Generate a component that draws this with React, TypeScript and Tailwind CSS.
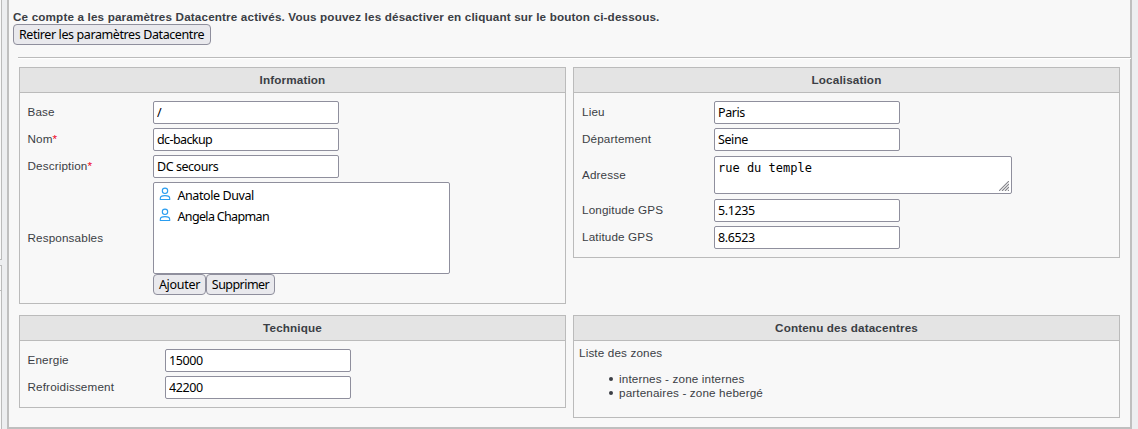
import type { ReactNode } from "react";

const uiFont = "font-['Noto_Sans',sans-serif] text-black";

function Panel({ title, className, children }: { title: string; className: string; children: ReactNode }) {
  return (
    <section className={`w-[547px] border border-[#bbbbbb] ${className}`}>
      <h2 className="flex h-[25px] items-center justify-center border-b border-[#bbbbbb] bg-[#e4e4e4] text-[11.7px] font-bold tracking-[0.14px]">
        {title}
      </h2>
      {children}
    </section>
  );
}

function Label({ children, required, className }: { children: ReactNode; required?: boolean; className: string }) {
  return (
    <label className={`shrink-0 pb-px tracking-[0.14px] ${className}`}>
      {children}
      {required && <span className="text-[#ee0022]">*</span>}
    </label>
  );
}

function Field({ label, value, required, labelWidth, tracking = "tracking-[-0.4px]" }: { label: string; value: string; required?: boolean; labelWidth: string; tracking?: string }) {
  return (
    <div className="flex h-[23px] items-center">
      <Label required={required} className={labelWidth}>{label}</Label>
      <input
        defaultValue={value}
        className={`h-[23px] w-[186px] rounded-[2px] border border-[#8f8f9d] bg-white px-[3px] text-[12.5px] outline-none ${tracking} ${uiFont}`}
      />
    </div>
  );
}

function Button({ children, className }: { children: ReactNode; className: string }) {
  return (
    <button
      className={`flex h-[21px] items-center justify-center whitespace-nowrap rounded-[4px] border border-[#8f8f9d] bg-[#e9e9ed] text-[12.5px] ${uiFont} ${className}`}
    >
      {children}
    </button>
  );
}

function Person({ name, tracking }: { name: string; tracking: string }) {
  return (
    <li className="flex h-[21px] items-center gap-[6.5px]">
      <svg width="12" height="14" viewBox="0 0 12 14" fill="none" stroke="#2a9df0" strokeWidth="1.1" className="-mt-[3px]">
        <circle cx="6" cy="3.8" r="2.7" />
        <path d="M1.300 12.500v-1.200C1.300 9.600 3.500 8.600 6 8.600s4.700 1 4.700 2.700v1.200z" />
      </svg>
      <span className={tracking}>{name}</span>
    </li>
  );
}

function Zone({ children }: { children: ReactNode }) {
  return (
    <li className="flex items-center gap-[6px]">
      <span className="size-1 rounded-full bg-[#3b3e45]" />
      {children}
    </li>
  );
}

export default function App() {
  return (
    <div className="flex h-[429px] w-[1138px] overflow-hidden bg-[#edeef0] font-['Liberation_Sans',Arial,sans-serif] text-[11.7px] leading-[14px] text-[#3b3e45]">
      <aside className="flex w-[7px] shrink-0 flex-col gap-[5px]">
        <div className="h-[260px] w-[2px] border-r border-b border-[#bbbbbb] bg-[#f8f8f8]" />
        <div className="h-[164px] w-[2px] border-t border-r border-[#bbbbbb] bg-[#f8f8f8]">
          <div className="h-[25px] border-b border-[#bbbbbb]" />
        </div>
      </aside>

      <main className="flex w-[1125px] shrink-0 flex-col border-x-2 border-b-2 border-[#bfbfbf] bg-[#f8f8f8]">
        <p className="mt-[10px] ml-1 h-[14px] whitespace-nowrap text-[11.7px] font-bold tracking-[0.15px]">
          Ce compte a les paramètres Datacentre activés. Vous pouvez les désactiver en cliquant sur le bouton ci-dessous.
        </p>
        <Button className="ml-1 w-[198px] pr-px tracking-[-0.4px]">Retirer les paramètres Datacentre</Button>
        <hr className="-mr-px mt-3 ml-[9px] h-[2px] border-t border-b border-t-[#bbbbbb] border-b-white" />

        <div className="mt-2 ml-[10px] flex h-[248px] items-start gap-[7px]">
          <Panel title="Information" className="h-[237px]">
            <div className="flex flex-col gap-1 pt-2 pl-[7.5px]">
              <Field label="Base" value="/" labelWidth="w-[125.5px]" />
              <Field label="Nom" value="dc-backup" required labelWidth="w-[125.5px]" tracking="tracking-[-0.6px]" />
              <Field label="Description" value="DC secours" required labelWidth="w-[125.5px]" tracking="tracking-[-0.45px]" />
              <div className="flex h-[113px] items-center">
                <Label className="w-[125.5px]">Responsables</Label>
                <div>
                  <ul className={`h-[92px] w-[297px] rounded-[2px] border border-[#8f8f9d] bg-white pt-[2px] pl-[5px] text-[12.5px] ${uiFont}`}>
                    <Person name="Anatole Duval" tracking="tracking-[-0.42px]" />
                    <Person name="Angela Chapman" tracking="tracking-[-0.66px]" />
                  </ul>
                  <div className="flex">
                    <Button className="w-[53px] tracking-[-0.3px]">Ajouter</Button>
                    <Button className="w-[69px] tracking-[-0.55px]">Supprimer</Button>
                  </div>
                </div>
              </div>
            </div>
          </Panel>

          <Panel title="Localisation" className="h-[191px]">
            <div className="flex flex-col pt-2 pl-2">
              <div className="flex flex-col gap-1">
                <Field label="Lieu" value="Paris" labelWidth="w-[132px]" />
                <Field label="Département" value="Seine" labelWidth="w-[132px]" />
              </div>
              <div className="my-[5px] flex h-[38px] items-center">
                <Label className="w-[132px]">Adresse</Label>
                <div className="flex h-[38px] w-[298px] items-end justify-between rounded-[2px] border border-[#8f8f9d] bg-white pr-[2px] pb-[2px] pl-[3px]">
                  <span className="self-start pt-1 font-['DejaVu_Sans_Mono',monospace] text-[12px] text-black">rue du temple</span>
                  <svg width="10" height="10" viewBox="0 0 10 10" stroke="#85858a" strokeWidth="1.1">
                    <path d="M0 10L10 0M3 10L10 3M6 10L10 6M9 10L10 9" />
                  </svg>
                </div>
              </div>
              <div className="flex flex-col gap-1">
                <Field label="Longitude GPS" value="5.1235" labelWidth="w-[132px]" />
                <Field label="Latitude GPS" value="8.6523" labelWidth="w-[132px]" />
              </div>
            </div>
          </Panel>
        </div>

        <div className="ml-[10px] flex items-start gap-[7px]">
          <Panel title="Technique" className="h-[93px]">
            <div className="flex flex-col gap-1 pt-2 pl-[7.5px]">
              <Field label="Energie" value="15000" labelWidth="w-[137.5px]" />
              <Field label="Refroidissement" value="42200" labelWidth="w-[137.5px]" />
            </div>
          </Panel>
          <Panel title="Contenu des datacentres" className="h-[103px]">
            <p className="pt-[5px] pl-[5px] tracking-[0.14px]">Liste des zones</p>
            <ul className="mt-3 pl-[35px] tracking-[0.14px]">
              <Zone>internes - zone internes</Zone>
              <Zone>partenaires - zone hebergé</Zone>
            </ul>
          </Panel>
        </div>
      </main>
    </div>
  );
}
